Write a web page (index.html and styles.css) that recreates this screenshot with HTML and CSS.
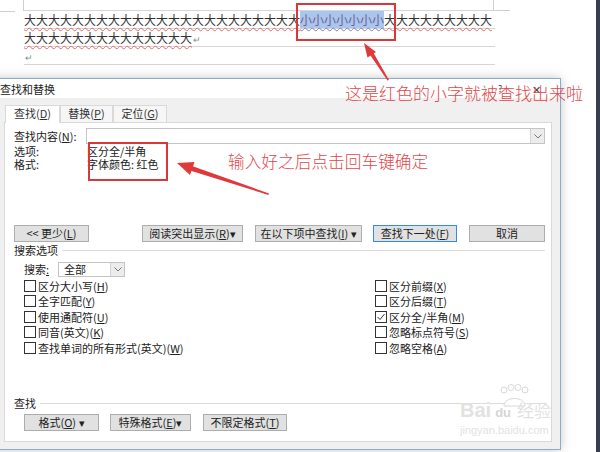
FILE: index.html
```html
<!DOCTYPE html>
<html lang="zh-CN">
<head>
  <meta charset="UTF-8">
  <title>查找和替换</title>
  <link rel="stylesheet" href="styles.css">
</head>
<body>
  <div class="screen">
    <div class="workspace">
      <div class="page">
        <div class="line"><span class="spell">大大大大大大大大大大大大大大大大大大大大大大大</span><span class="hit">小小小小小小小</span><span class="spell">大大大大大大大大大</span></div>
        <div class="line"><span class="spell">大大大大大大大大大大大大大大</span><span class="mark">↵</span></div>
        <div class="line"><span class="mark">↵</span></div>
      </div>

      <div class="dialog">
        <div class="titlebar">
          <span class="title">查找和替换</span>
          <span class="help">?</span>
          <span class="close">✕</span>
        </div>
        <div class="tabs">
          <div class="tab active">查找(<u>D</u>)</div>
          <div class="tab narrow">替换(<u>P</u>)</div>
          <div class="tab">定位(<u>G</u>)</div>
        </div>
        <div class="panel">
          <div class="find-row">
            <span class="label">查找内容(<u>N</u>):</span>
            <div class="combo">
              <span class="combo-text"></span>
              <span class="arrow"><svg width="8" height="5" viewBox="0 0 8 5"><polyline points="0.5,0.5 4,4 7.5,0.5" fill="none" stroke="#777" stroke-width="1"/></svg></span>
            </div>
          </div>
          <div class="opts">
            <span>选项:</span><span>区分全/半角</span>
            <span>格式:</span><span>字体颜色: 红色</span>
          </div>

          <div class="actions">
            <button class="btn less">&lt;&lt; 更少(<u>L</u>)</button>
            <button class="btn read">阅读突出显示(<u>R</u>)▾</button>
            <button class="btn scope">在以下项中查找(<u>I</u>) ▾</button>
            <button class="btn next">查找下一处(<u>F</u>)</button>
            <button class="btn cancel">取消</button>
          </div>

          <div class="group">搜索选项</div>
          <div class="search-row">
            <span class="search-label">搜索<u>:</u></span>
            <div class="select">
              <span class="combo-text">全部</span>
              <span class="arrow"><svg width="8" height="5" viewBox="0 0 8 5"><polyline points="0.5,0.5 4,4 7.5,0.5" fill="none" stroke="#777" stroke-width="1"/></svg></span>
            </div>
          </div>
          <div class="checks">
            <label class="check"><span class="box"></span>区分大小写(<u>H</u>)</label>
            <label class="check"><span class="box"></span>全字匹配(<u>Y</u>)</label>
            <label class="check"><span class="box"></span>使用通配符(<u>U</u>)</label>
            <label class="check"><span class="box"></span>同音(英文)(<u>K</u>)</label>
            <label class="check"><span class="box"></span>查找单词的所有形式(英文)(<u>W</u>)</label>
            <label class="check"><span class="box"></span>区分前缀(<u>X</u>)</label>
            <label class="check"><span class="box"></span>区分后缀(<u>T</u>)</label>
            <label class="check"><span class="box"><svg width="10" height="10" viewBox="0 0 10 10"><polyline points="1.5,5 4,7.5 8.5,2" fill="none" stroke="#333" stroke-width="1"/></svg></span>区分全/半角(<u>M</u>)</label>
            <label class="check"><span class="box"></span>忽略标点符号(<u>S</u>)</label>
            <label class="check"><span class="box"></span>忽略空格(<u>A</u>)</label>
          </div>

          <div class="group find-group">查找</div>
          <div class="actions bottom">
            <button class="btn fmt">格式(<u>O</u>) ▾</button>
            <button class="btn special">特殊格式(<u>E</u>)▾</button>
            <button class="btn nofmt">不限定格式(<u>T</u>)</button>
          </div>
        </div>
      </div>
    </div>
    <div class="edge"></div>
  </div>

  <!-- annotations drawn over the screenshot -->
  <svg class="notes" width="600" height="452" viewBox="0 0 600 452">
    <rect x="297" y="4" width="98" height="36" fill="none" stroke="#d8383a" stroke-width="2"/>
    <rect x="89" y="143" width="78" height="37" fill="none" stroke="#d8383a" stroke-width="2"/>
    <polygon points="389,80 387.5,80.5 369.5,54 373,52" fill="#e0393b"/>
    <polygon points="364,43 376,52 367.5,57.5" fill="#e0393b"/>
    <polygon points="269,193.5 268.5,195 190,170.5 192,166" fill="#e0393b"/>
    <polygon points="177,163 194.5,162 190,175" fill="#e0393b"/>
  </svg>
  <div class="note note-top">这是红色的小字就被查找出来啦</div>
  <div class="note note-mid">输入好之后点击回车键确定</div>

  <div class="watermark">
    <svg class="paw" width="36" height="26" viewBox="0 0 36 26">
      <circle cx="8" cy="6" r="3" fill="none" stroke="#d8d8d8"/>
      <circle cx="15" cy="3.5" r="3" fill="none" stroke="#d8d8d8"/>
      <circle cx="22" cy="3.5" r="3" fill="none" stroke="#d8d8d8"/>
      <circle cx="29" cy="6" r="3" fill="none" stroke="#d8d8d8"/>
      <path d="M8 22 C8 12, 29 12, 29 22 Z" fill="#fff" stroke="#d8d8d8"/>
    </svg>
    <div class="wm-top"><span>Bai</span><span class="wm-du">du</span><span class="wm-cn">经验</span></div>
    <div class="wm-url">jingyan.baidu.com</div>
  </div>
</body>
</html>
```

FILE: styles.css
```css
* {
  box-sizing: border-box;
}
body {
  margin: 0;
  width: 600px;
  height: 452px;
  overflow: hidden;
  position: relative;
  background: #fff;
  color: #222;
  font-family: "Noto Sans CJK SC", "Liberation Sans", sans-serif;
}
u {
  text-underline-offset: 1px;
}
.screen {
  display: flex;
  height: 452px;
}
.workspace {
  flex: 1;
  background: #fff;
}
.edge {
  width: 4px;
  background: #34404f;
}

/* document behind the dialog */
.page {
  position: relative;
  width: 471px;
  margin: 10px 0 0 24px;
  border-top: 1px solid #d6d6d6;
  font-size: 12px;
}
.page::before {
  content: "";
  position: absolute;
  left: -1px;
  top: -11px;
  width: 1px;
  height: 11px;
  background: #cfcfcf;
  box-shadow: 470px 0 0 #cfcfcf;
}
.page::after {
  content: "";
  position: absolute;
  left: -24px;
  top: 0;
  width: 15px;
  height: 1px;
  background: #cfcfcf;
  box-shadow: 495px -1px 0 #cfcfcf;
}
.line {
  height: 18px;
  line-height: 17px;
  border-bottom: 1px solid #d6d6d6;
  white-space: nowrap;
}
.spell {
  color: #333;
  text-decoration: underline wavy #e36b6b;
  text-decoration-thickness: 1px;
  text-underline-offset: 2px;
}
.hit {
  background: #a9c6ec;
  color: #6f5f99;
  text-decoration: underline wavy #8c7bb5;
  text-decoration-thickness: 1px;
  text-underline-offset: 2px;
}
.mark {
  color: #8a8a8a;
  font-size: 9px;
  margin-left: 1px;
}

/* find & replace dialog */
.dialog {
  display: flex;
  flex-direction: column;
  width: 571px;
  height: 372px;
  margin: 13px 0 0 -10px;
  border: 1px solid #8fa9c9;
  background: #f0f0f0;
  box-shadow: 0 0 10px rgba(0, 0, 0, 0.22);
  font-size: 11px;
}
.titlebar {
  display: flex;
  align-items: center;
  height: 19px;
  padding: 0 14px 0 9px;
  background: #fff;
}
.title {
  flex: 1;
}
.help {
  width: 10px;
  margin-right: 24px;
  font-size: 9px;
  color: #444;
}
.close {
  width: 14px;
  font-size: 11px;
  color: #444;
}
.tabs {
  display: flex;
  height: 24px;
  padding: 7px 0 0 14px;
}
.tab {
  width: 54px;
  height: 17px;
  border: 1px solid #d9d9d9;
  border-bottom: none;
  background: #f6f6f6;
  text-align: center;
  line-height: 15px;
  color: #333;
}
.tab.active {
  position: relative;
  z-index: 1;
  width: 55px;
  height: 18px;
  background: #fff;
}
.tab.narrow {
  width: 53px;
}
.panel {
  height: 320px;
  margin: 0 8px 0 13px;
  padding: 5px 6px 0 9px;
  background: #fff;
  border: 1px solid #d9d9d9;
}
.find-row {
  display: flex;
  height: 16px;
}
.label {
  width: 72px;
  line-height: 16px;
}
.combo,
.select {
  display: flex;
  flex: 1;
  border: 1px solid #c4c4c4;
  background: #fff;
}
.combo-text {
  flex: 1;
  padding-left: 6px;
  line-height: 13px;
}
.arrow {
  display: flex;
  align-items: center;
  justify-content: center;
  width: 14px;
  border-left: 1px solid #d4d4d4;
  background: #ececec;
}
.opts {
  display: grid;
  grid-template-columns: 73px auto;
  margin-top: 1px;
  line-height: 13px;
}

.actions {
  display: flex;
  margin-top: 54px;
}
.btn {
  height: 17px;
  padding: 0;
  border: 1px solid #adadad;
  background: #e1e1e1;
  color: #222;
  font-family: inherit;
  font-size: 11px;
  line-height: 15px;
  text-align: center;
}
.less { width: 75px; }
.read { width: 101px; margin-left: 53px; }
.scope { width: 107px; margin-left: 12px; }
.next {
  width: 84px;
  margin-left: 11px;
  border-color: #3d8ad6;
  box-shadow: inset 0 0 0 1px #d2e4f6;
}
.cancel { width: 76px; margin-left: 12px; }

.group {
  display: flex;
  align-items: center;
  margin-top: 2px;
  line-height: 12px;
}
.group::after {
  content: "";
  flex: 1;
  height: 1px;
  margin-left: 4px;
  background: #dcdcdc;
}
.search-row {
  display: flex;
  height: 15px;
  margin-top: 6px;
  padding-left: 10px;
}
.search-label {
  width: 34px;
  line-height: 15px;
}
.select {
  flex: 0 0 67px;
}
.select .combo-text {
  padding-left: 5px;
  line-height: 12px;
}
.checks {
  display: grid;
  grid-template-columns: 351px 1fr;
  grid-template-rows: repeat(5, 15.5px);
  grid-auto-flow: column;
  margin-top: 1px;
  padding-left: 10px;
}
.check {
  display: flex;
  align-items: center;
  white-space: nowrap;
}
.box {
  display: flex;
  align-items: center;
  justify-content: center;
  width: 12px;
  height: 12px;
  margin-right: 2px;
  border: 1px solid #333;
  background: #fff;
}
.find-group {
  margin-top: 41.5px;
}
.actions.bottom {
  margin-top: 5px;
  padding-left: 10px;
}
.fmt { width: 75px; }
.special { width: 81px; margin-left: 11px; }
.nofmt { width: 84px; margin-left: 12px; }

/* red annotations on top */
.notes {
  position: absolute;
  left: 0;
  top: 0;
  pointer-events: none;
}
.note {
  position: absolute;
  color: #e2474a;
  font-size: 17px;
  line-height: 20px;
  font-weight: 300;
  white-space: nowrap;
}
.note-top {
  left: 345px;
  top: 83px;
}
.note-mid {
  left: 228px;
  top: 151px;
  font-size: 16.7px;
}

/* faint site watermark */
.watermark {
  position: absolute;
  left: 460px;
  top: 384px;
  width: 110px;
  color: #e2e2e2;
  font-family: "Liberation Sans", sans-serif;
}
.paw {
  display: block;
  margin-left: 36px;
}
.wm-top {
  display: flex;
  align-items: baseline;
  margin-top: -10px;
  font-size: 20px;
  line-height: 20px;
  font-weight: bold;
}
.wm-du {
  font-size: 13px;
  color: #d6d6d6;
  margin: 0 6px 0 4px;
}
.wm-cn {
  font-family: "Noto Sans CJK SC", sans-serif;
  font-size: 17px;
  font-weight: normal;
}
.wm-url {
  font-size: 11px;
  line-height: 14px;
}
```
